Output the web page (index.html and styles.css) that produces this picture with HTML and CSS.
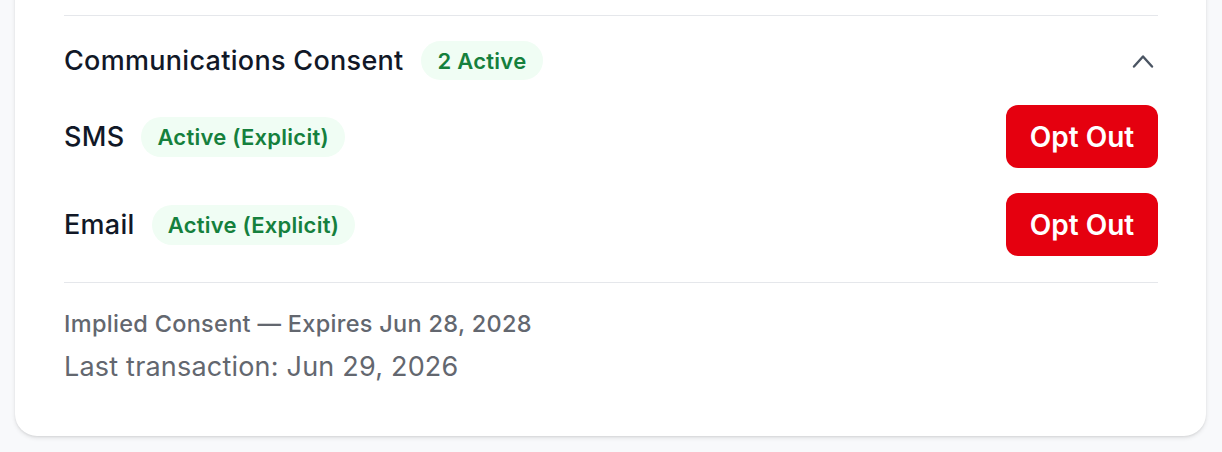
FILE: index.html
```html
<!DOCTYPE html>
<html>
<head>
<meta charset="utf-8">
<link rel="stylesheet" href="styles.css">
</head>
<body>
<div class="card">
  <div class="prev-section"></div>
  <section class="consent">
    <div class="consent-header">
      <div class="title-group">
        <h2 class="title">Communications Consent</h2>
        <span class="badge badge-lg">2 Active</span>
      </div>
      <svg class="chevron" width="22" height="14" viewBox="0 0 22 14" fill="none" stroke="currentColor" stroke-width="2.4" stroke-linecap="round" stroke-linejoin="round"><path d="M2 12.5L11 2.5l9 10"/></svg>
    </div>
    <div class="channel">
      <div class="channel-info">
        <span class="channel-name">SMS</span>
        <span class="badge">Active (Explicit)</span>
      </div>
      <button class="opt-out">Opt Out</button>
    </div>
    <div class="channel">
      <div class="channel-info">
        <span class="channel-name">Email</span>
        <span class="badge">Active (Explicit)</span>
      </div>
      <button class="opt-out">Opt Out</button>
    </div>
  </section>
  <footer class="consent-footer">
    <div class="implied">Implied Consent — Expires Jun 28, 2028</div>
    <div class="last-tx">Last transaction: Jun 29, 2026</div>
  </footer>
</div>
</body>
</html>
```
FILE: styles.css
```css
html, body {
  margin: 0;
  padding: 0;
}
body {
  background: #f8f9fb;
  font-family: Inter, "Noto Sans", sans-serif;
  height: 452px;
  overflow: hidden;
}
.card {
  margin: -39px 16px 0 15px;
  background: #fff;
  border-radius: 22px;
  box-shadow: 0 2px 4px rgba(0,0,0,0.10), 0 1px 2px rgba(0,0,0,0.06);
  padding: 0 48px 52px 49px;
}
.prev-section {
  height: 54px;
  border-bottom: 1px solid #e5e7eb;
}
.consent {
  padding: 25px 0 26px 0;
  border-bottom: 1px solid #e5e7eb;
  display: flex;
  flex-direction: column;
  gap: 25px;
}
.consent-header {
  display: flex;
  align-items: center;
  justify-content: space-between;
  height: 39px;
}
.title-group {
  display: flex;
  align-items: center;
  gap: 17px;
}
.title {
  margin: 0;
  font-size: 27px;
  letter-spacing: 0.3px;
  font-weight: 500;
  color: #111827;
}
.chevron {
  color: #4b5563;
  margin-right: 4px;
}
.badge {
  display: inline-flex;
  align-items: center;
  height: 40px;
  padding: 0 16px 0 16px;
  border-radius: 20px;
  background: #f0fdf4;
  color: #15803d;
  font-size: 22px;
  letter-spacing: 0.25px;
  font-weight: 600;
}
.badge-lg {
  height: 39px;
  padding: 0 17px;
}
.channel {
  display: flex;
  align-items: center;
  justify-content: space-between;
}
.channel-info {
  display: flex;
  align-items: center;
  gap: 17px;
}
.channel-name {
  font-size: 27px;
  letter-spacing: 0.3px;
  font-weight: 500;
  color: #111827;
}
.opt-out {
  width: 152px;
  height: 63px;
  border: none;
  border-radius: 12px;
  background: #e5000f;
  color: #fff;
  font-family: inherit;
  font-size: 28px;
  font-weight: 600;
  padding: 0;
}
.consent-footer {
  padding-top: 26px;
  display: flex;
  flex-direction: column;
  gap: 11px;
}
.implied {
  font-size: 23.5px;
  line-height: 30px;
  letter-spacing: 0.3px;
  font-weight: 500;
  color: #63676f;
}
.last-tx {
  font-size: 27px;
  line-height: 34px;
  letter-spacing: 0.2px;
  color: #63676f;
}
```
